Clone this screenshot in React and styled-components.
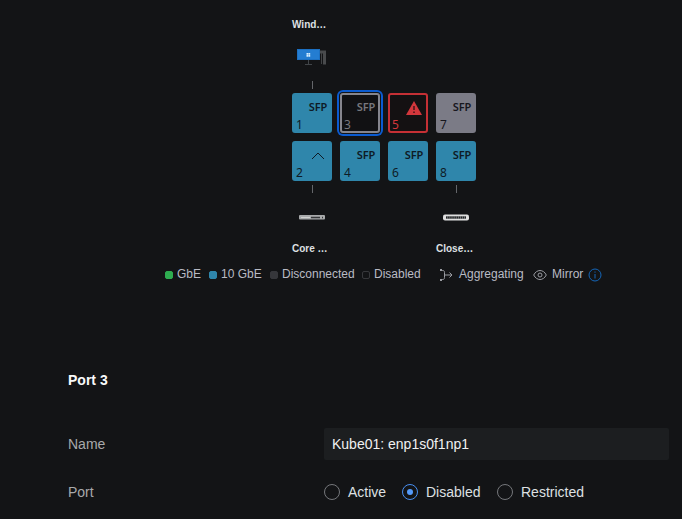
import React from "react";
import styled, { createGlobalStyle } from "styled-components";

const Global = createGlobalStyle`
  *, *::before, *::after { box-sizing: border-box; }
  body {
    margin: 0;
    background: #131416;
    font-family: "Liberation Sans", Arial, sans-serif;
    overflow: hidden;
  }
`;

const Page = styled.main`
  width: 682px;
  height: 519px;
  display: flex;
  flex-direction: column;
  background: #131416;
`;

const Switch = styled.section`
  display: grid;
  grid-template-columns: repeat(4, 40px);
  grid-template-rows: 16px 40px 20px 44px 44px 20px 40px 16px;
  column-gap: 8px;
  row-gap: 0;
  margin: 17px 0 0 292px;
`;

const PortGrid = styled.div`
  grid-column: 1 / -1;
  grid-row: 4 / 6;
  display: grid;
  grid-template-columns: repeat(4, 40px);
  grid-auto-rows: 40px;
  gap: 8px;
`;

const DeviceName = styled.div`
  grid-column: ${(p) => p.$col};
  grid-row: ${(p) => p.$row};
  font-size: 10px;
  font-weight: 700;
  line-height: 16px;
  color: #dee0e3;
  white-space: nowrap;
`;

const DeviceIcon = styled.svg`
  grid-column: ${(p) => p.$col};
  grid-row: ${(p) => p.$row};
  width: 40px;
  height: 40px;
`;

const Link = styled.div`
  grid-column: ${(p) => p.$col};
  grid-row: ${(p) => p.$row};
  width: 1px;
  height: 8px;
  margin: ${(p) => (p.$below ? "4px" : "8px")} 0 0 20px;
  background: #64666a;
`;

const looks = {
  active: { fill: "#2f86ab", edge: "#2f86ab", ink: "#0e1b26" },
  idle: { fill: "#7b7b86", edge: "#7b7b86", ink: "#17171e" },
  off: { fill: "#111113", edge: "#85858d", ink: "#77777d" },
  error: { fill: "#141112", edge: "#c53035", ink: "#d3373c" },
};

const PortBox = styled.div`
  width: 40px;
  height: 40px;
  display: flex;
  flex-direction: column;
  justify-content: space-between;
  padding: 5px 3px 0 2px;
  border: 2px solid ${(p) => looks[p.$look].edge};
  border-radius: 3px;
  background: ${(p) => looks[p.$look].fill};
  color: ${(p) => looks[p.$look].ink};
  box-shadow: ${(p) =>
    p.$selected ? "0 0 0 1px #131416, 0 0 0 3px #0b5bd0" : "none"};
`;

const PortType = styled.div`
  height: 14px;
  display: flex;
  justify-content: flex-end;
  align-items: center;
  font: 600 11px/14px "Noto Sans", sans-serif;
  letter-spacing: -0.2px;
`;

const PortNumber = styled.div`
  font: 400 12px/14px "Noto Sans", sans-serif;
  margin-bottom: -1px;
`;

const Mark = styled.svg`
  width: ${(p) => p.$width}px;
  height: 14px;
  margin: 1px ${(p) => p.$inset}px -1px 0;
`;

const Legend = styled.div`
  height: 16px;
  margin: 9px 0 0 165px;
  display: flex;
  align-items: center;
  font-size: 12px;
  line-height: 16px;
  color: #b9bbc4;
  white-space: nowrap;
`;

const LegendItem = styled.div`
  width: ${(p) => p.$width}px;
  flex: none;
  display: flex;
  align-items: center;
  gap: ${(p) => p.$gap || 4}px;
`;

const Swatch = styled.span`
  width: 8px;
  height: 8px;
  margin-top: 2px;
  border-radius: 2px;
  border: 1px solid ${(p) => p.$edge || p.$color};
  background: ${(p) => p.$color};
`;

const LegendIcon = styled.svg`
  width: 14px;
  height: 14px;
  flex: none;
  margin-top: 2px;
`;

const Settings = styled.section`
  padding: 90px 13px 0 68px;
`;

const Title = styled.h2`
  margin: 0;
  font-size: 14px;
  line-height: 16px;
  font-weight: 700;
  color: #f9fafa;
`;

const Field = styled.div`
  display: grid;
  grid-template-columns: 256px 345px;
  align-items: center;
  height: 32px;
  margin-top: ${(p) => p.$space}px;
  font-size: 14px;
  line-height: 16px;
`;

const FieldLabel = styled.label`
  color: #a8a9ab;
`;

const NameInput = styled.input`
  width: 345px;
  height: 32px;
  padding: 0 8px;
  border: 0;
  border-radius: 2px;
  outline: none;
  background: #1c1e20;
  color: #f0f1f2;
  font: 14px/16px "Liberation Sans", Arial, sans-serif;
`;

const Choices = styled.div`
  display: flex;
  align-items: center;
`;

const Choice = styled.div`
  width: ${(p) => p.$width}px;
  display: flex;
  align-items: center;
  gap: 8px;
  color: #dee0e3;
`;

const Radio = styled.span`
  width: 16px;
  height: 16px;
  flex: none;
  display: grid;
  place-items: center;
  border: 1px solid ${(p) => (p.$on ? "#478ef0" : "#75777b")};
  border-radius: 50%;

  &::after {
    content: "";
    width: 6px;
    height: 6px;
    border-radius: 50%;
    background: ${(p) => (p.$on ? "#559bfa" : "transparent")};
  }
`;

const ports = [
  { n: 1, look: "active" },
  { n: 3, look: "off", selected: true },
  { n: 5, look: "error", mark: "warning" },
  { n: 7, look: "idle" },
  { n: 2, look: "active", mark: "uplink" },
  { n: 4, look: "active" },
  { n: 6, look: "active" },
  { n: 8, look: "active" },
];

const Uplink = () => (
  <Mark $width={14} $inset={2} viewBox="0 0 14 14" fill="none" stroke="currentColor">
    <path d="M1 10 7 4l6 6" />
  </Mark>
);

const Warning = () => (
  <Mark $width={16} $inset={1} viewBox="0 0 16 14">
    <path d="M8 0 16 14H0Z" fill="currentColor" />
    <path d="M8 5v4M8 10.5v1.5" stroke="#411519" strokeWidth="1.5" />
  </Mark>
);

function Port({ n, look, mark, selected }) {
  return (
    <PortBox $look={look} $selected={selected}>
      <PortType>
        {mark === "warning" ? <Warning /> : mark === "uplink" ? <Uplink /> : "SFP"}
      </PortType>
      <PortNumber>{n}</PortNumber>
    </PortBox>
  );
}

export default function App() {
  return (
    <Page>
      <Global />
      <Switch>
        <DeviceName $col={1} $row={1}>Wind…</DeviceName>
        <DeviceIcon $col={1} $row={2} viewBox="0 0 40 40">
          <path d="M28 17.5h6v14h-3v-11h-3z" fill="#494b4d" />
          <path d="M29.5 20v11" stroke="#414345" />
          <path d="M5 16h23v11H5z" fill="#1c70c2" />
          <path d="M6 17h21v9H6z" fill="#247dd1" />
          <path d="M14.5 20h1.7v1.7h-1.7zm2 0h1.7v1.7h-1.7zm-2 2h1.7v1.7h-1.7zm2 0h1.7v1.7h-1.7z" fill="#d8efff" />
          <path d="M16.5 27v4M13 31.5h7" stroke="#414549" />
        </DeviceIcon>
        <Link $col={1} $row={3} />
        <PortGrid>
          {ports.map((port) => <Port key={port.n} {...port} />)}
        </PortGrid>
        <Link $col={1} $row={6} $below />
        <Link $col={4} $row={6} $below />
        <DeviceIcon $col={1} $row={7} viewBox="0 0 40 40">
          <rect x="7" y="14" width="26" height="4.5" rx="1" fill="#a8aaab" />
          <path d="M9 16.5h9" stroke="#d0d1d0" />
          <path d="M19 16.5h9M30 16.5h1" stroke="#343638" strokeWidth="1.5" />
        </DeviceIcon>
        <DeviceIcon $col={4} $row={7} viewBox="0 0 40 40">
          <rect x="7" y="13.5" width="26" height="6" rx="2" fill="#dfdfdf" />
          <rect x="10" y="15" width="20" height="3" fill="#999b9c" />
          <path d="M10 16.5h20" stroke="#202224" strokeWidth="2" strokeDasharray="1.5 .6" />
        </DeviceIcon>
        <DeviceName $col={1} $row={8}>Core …</DeviceName>
        <DeviceName $col={4} $row={8}>Close…</DeviceName>
      </Switch>
      <Legend>
        <LegendItem $width={44}><Swatch $color="#2eac50" />GbE</LegendItem>
        <LegendItem $width={61}><Swatch $color="#2f86ab" />10 GbE</LegendItem>
        <LegendItem $width={92}><Swatch $color="#36373b" />Disconnected</LegendItem>
        <LegendItem $width={77}><Swatch $color="#131416" $edge="#37383b" />Disabled</LegendItem>
        <LegendItem $width={94} $gap={6}>
          <LegendIcon viewBox="0 0 14 14" fill="none" stroke="#9a9ca2">
            <path d="M3 2.5h.5c1.5 0 2 .5 2 2v5c0 1.5-.5 2-2 2H3M5.5 7H13M10.5 4.5 13 7l-2.5 2.5" />
            <path d="M1 2h2M1 12h2" strokeWidth="2" />
          </LegendIcon>
          Aggregating
        </LegendItem>
        <LegendItem $width={55} $gap={5}>
          <LegendIcon viewBox="0 0 14 14" fill="none" stroke="#9a9ca2">
            <path d="M.7 7c3-6 9.6-6 12.6 0-3 6-9.6 6-12.6 0Z" />
            <circle cx="7" cy="7" r="2" />
          </LegendIcon>
          Mirror
        </LegendItem>
        <LegendIcon viewBox="0 0 14 14" fill="none" stroke="#1465b7">
          <circle cx="7" cy="7" r="6" />
          <path d="M7 6v4.5M7 3.5v1.2" />
        </LegendIcon>
      </Legend>
      <Settings>
        <Title>Port 3</Title>
        <Field $space={40}>
          <FieldLabel htmlFor="port-name">Name</FieldLabel>
          <NameInput id="port-name" defaultValue="Kube01: enp1s0f1np1" />
        </Field>
        <Field $space={16}>
          <FieldLabel as="span">Port</FieldLabel>
          <Choices>
            <Choice $width={78}><Radio />Active</Choice>
            <Choice $width={95}><Radio $on />Disabled</Choice>
            <Choice $width={110}><Radio />Restricted</Choice>
          </Choices>
        </Field>
      </Settings>
    </Page>
  );
}
